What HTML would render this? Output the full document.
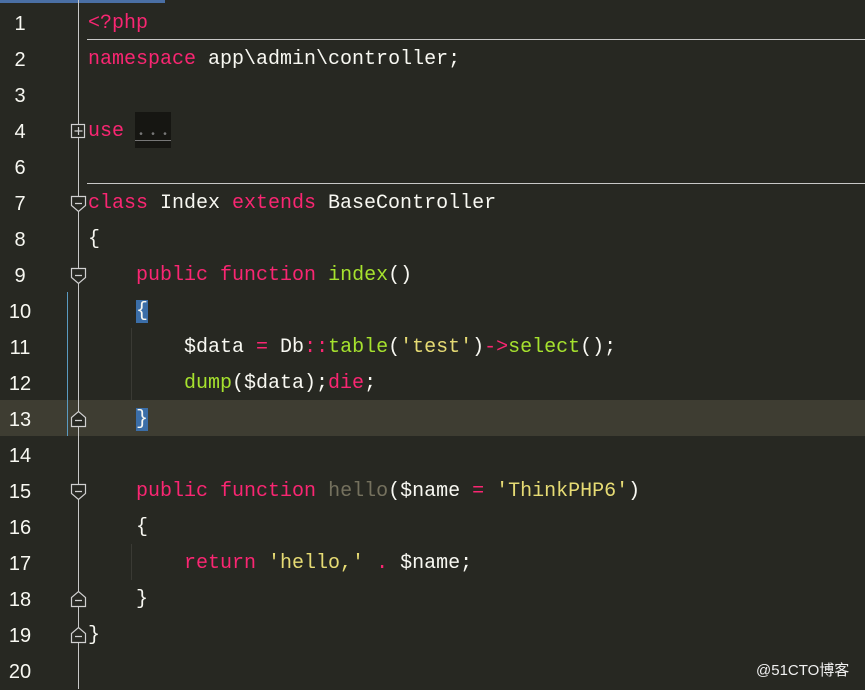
<!DOCTYPE html>
<html><head><meta charset="utf-8"><style>
body{margin:0;width:865px;height:689px;background:#272822;overflow:hidden;position:relative;font-family:"Liberation Mono",monospace;font-size:20px;}
.r{position:absolute;left:0;width:865px;height:36px;line-height:36px;white-space:pre;}
.n{position:absolute;left:0;width:40px;text-align:center;color:#f8f8f2;font-family:"Liberation Sans",sans-serif;font-size:20px;}
.c{position:absolute;left:88px;color:#f8f8f2;}
.k{color:#f92672}.g{color:#a6e22e}.m{color:#75715e}.w{color:#f8f8f2}.y{color:#e6db74}
.sel{background:#3b6ea8;}
</style></head><body>
<div style="position:absolute;left:0;top:0;width:165px;height:3px;background:#4a6fa5"></div>
<div style="position:absolute;left:0;top:400px;width:865px;height:36px;background:#3e3d32"></div>
<div style="position:absolute;left:78px;top:0;width:1px;height:689px;background:#c8c8c8"></div>
<div style="position:absolute;left:67px;top:292px;width:1px;height:144px;background:#5a9ac0"></div>
<div style="position:absolute;left:87px;top:39px;width:778px;height:1px;background:#c8c8c8"></div>
<div style="position:absolute;left:87px;top:183px;width:778px;height:1px;background:#c8c8c8"></div>
<div style="position:absolute;left:131px;top:328px;width:1px;height:72px;background:#3a3a34"></div>
<div style="position:absolute;left:131px;top:544px;width:1px;height:36px;background:#3a3a34"></div>
<div style="position:absolute;left:135px;top:112px;width:36px;height:36px;background:#161612"></div>
<div style="position:absolute;left:138px;top:133px;color:#777;font-size:10px;line-height:6px;">• • •</div>
<div style="position:absolute;left:135px;top:140px;width:36px;height:1px;background:#777"></div>
<svg style="position:absolute;left:0;top:0" width="865" height="689">
<g fill="#272822" stroke="#d0d0d0" stroke-width="1.2">
<rect x="71.5" y="124.5" width="13" height="13"/>
<path d="M71.5 196.5h14v9l-7 6l-7-6z"/>
<path d="M71.5 268.5h14v9l-7 6l-7-6z"/>
<path d="M71.5 426.5h14v-9l-7-6l-7 6z"/>
<path d="M71.5 484.5h14v9l-7 6l-7-6z"/>
<path d="M71.5 606.5h14v-9l-7-6l-7 6z"/>
<path d="M71.5 642.5h14v-9l-7-6l-7 6z"/>
</g>
<g stroke="#d0d0d0" stroke-width="1.2">
<path d="M74.5 131h8M78.5 127v8"/>
<path d="M75 203.5h7M75 275.5h7M75 420.5h7M75 491.5h7M75 600.5h7M75 636.5h7"/>
</g>
</svg>
<div class="r" style="top:6px"><span class="n">1</span><span class="c"><span class="k">&lt;?php</span></span></div>
<div class="r" style="top:42px"><span class="n">2</span><span class="c"><span class="k">namespace</span> app\admin\controller;</span></div>
<div class="r" style="top:78px"><span class="n">3</span></div>
<div class="r" style="top:114px"><span class="n">4</span><span class="c"><span class="k">use</span></span></div>
<div class="r" style="top:150px"><span class="n">6</span></div>
<div class="r" style="top:186px"><span class="n">7</span><span class="c"><span class="k">class</span> Index <span class="k">extends</span> BaseController</span></div>
<div class="r" style="top:222px"><span class="n">8</span><span class="c">{</span></div>
<div class="r" style="top:258px"><span class="n">9</span><span class="c">    <span class="k">public</span> <span class="k">function</span> <span class="g">index</span>()</span></div>
<div class="r" style="top:294px"><span class="n">10</span><span class="c">    <span class="sel">{</span></span></div>
<div class="r" style="top:330px"><span class="n">11</span><span class="c">        $data <span class="k">=</span> Db<span class="k">::</span><span class="g">table</span>(<span class="y">'test'</span>)<span class="k">-&gt;</span><span class="g">select</span>();</span></div>
<div class="r" style="top:366px"><span class="n">12</span><span class="c">        <span class="g">dump</span>($data);<span class="k">die</span>;</span></div>
<div class="r" style="top:402px"><span class="n">13</span><span class="c">    <span class="sel">}</span></span></div>
<div class="r" style="top:438px"><span class="n">14</span></div>
<div class="r" style="top:474px"><span class="n">15</span><span class="c">    <span class="k">public</span> <span class="k">function</span> <span class="m">hello</span>($name <span class="k">=</span> <span class="y">'ThinkPHP6'</span>)</span></div>
<div class="r" style="top:510px"><span class="n">16</span><span class="c">    {</span></div>
<div class="r" style="top:546px"><span class="n">17</span><span class="c">        <span class="k">return</span> <span class="y">'hello,'</span> <span class="k">.</span> $name;</span></div>
<div class="r" style="top:582px"><span class="n">18</span><span class="c">    }</span></div>
<div class="r" style="top:618px"><span class="n">19</span><span class="c">}</span></div>
<div class="r" style="top:654px"><span class="n">20</span></div>
<div style="position:absolute;left:756px;top:659px;color:#f0f0f0;font-family:'Liberation Sans','Noto Sans CJK SC',sans-serif;font-size:15px;">@51CTO博客</div>
</body></html>
